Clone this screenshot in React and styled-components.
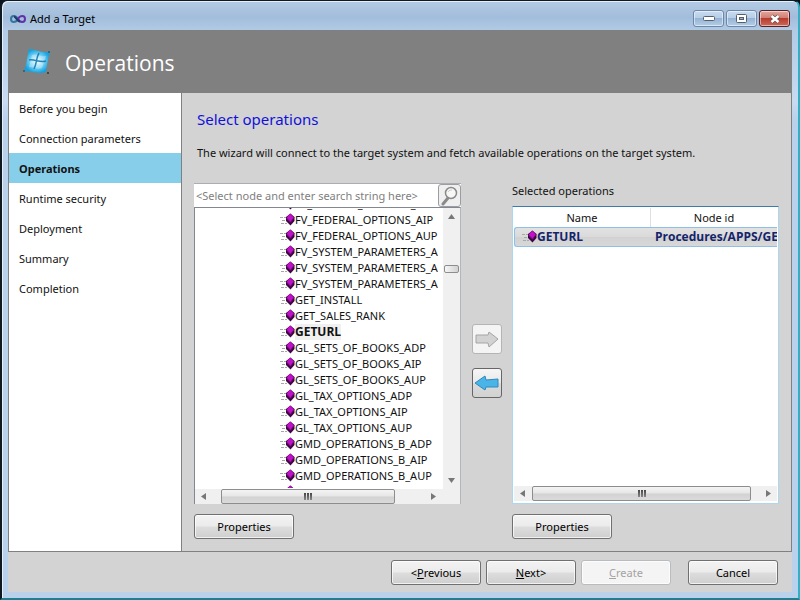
import React from "react";
import styled, { createGlobalStyle } from "styled-components";

const GlobalStyle = createGlobalStyle`
  * { box-sizing: border-box; }
  body { margin: 0; background: #0a1420; }
  body, button, input { font: 11px/16px "Noto Sans", "Open Sans", sans-serif; color: #111; }
  h1, h2, p, ul, ol { margin: 0; padding: 0; font-weight: 400; list-style: none; }
`;

const Window = styled.div`
  display: flex;
  flex-direction: column;
  min-height: 100vh;
  padding: 0 6px 6px;
  border: 2px solid #101820;
  border-top-width: 1px;
  border-right-color: #2fb0c4;
  border-bottom-color: #1f7f90;
  border-radius: 7px 7px 0 0;
  background: linear-gradient(#b4cbe4 0, #a2bddb 16px, #b2cbe6 30px, #c8dbf1 100px, #b9d1ea 120px, #b9d1ea);
  box-shadow: inset 1px 1px 0 #e4f0fb;
`;

const TitleBar = styled.div`
  display: flex;
  align-items: center;
  height: 29px;
  padding: 6px 2px 0 2px;
`;

const Title = styled.span`
  flex: 1;
  padding: 0 0 0 4px;
  color: #000;
`;

const Controls = styled.div`
  display: flex;
  gap: 2px;
`;

const ControlButton = styled.button`
  display: grid;
  place-items: center;
  width: 31px;
  height: 17px;
  padding: 0;
  border: 1px solid ${(p) => (p.$close ? "#5a1f24" : "#6d87a6")};
  border-radius: 3px;
  background: ${(p) =>
    p.$close
      ? "linear-gradient(#e3a79d, #cf7d72 48%, #b83b2c 50%, #cc6a5a)"
      : "linear-gradient(#c9dcf0, #b6cde6 48%, #95b3d4 50%, #b5cee8)"};
  box-shadow: inset 0 0 0 1px rgba(255, 255, 255, 0.5);
`;

const Client = styled.div`
  display: flex;
  flex-direction: column;
  flex: 1;
  background: #d3d3d3;
`;

const Banner = styled.header`
  display: flex;
  align-items: center;
  gap: 13px;
  height: 63px;
  padding: 0 14px;
  background: #808080;
  h1 { color: #fff; font-family: "Open Sans", sans-serif; font-size: 21px; line-height: 30px; padding-top: 2px; }
`;

const Body = styled.div`
  display: flex;
  flex: 1;
  border: 1px solid #808080;
  border-top: 0;
`;

const Sidebar = styled.ol`
  flex: 0 0 173px;
  background: #fff;
  border-right: 1px solid #808080;
`;

const Step = styled.li`
  height: 30px;
  padding: 8px 10px;
  line-height: 16px;
  background: ${(p) => (p.$current ? "#87ceeb" : "transparent")};
  font-weight: ${(p) => (p.$current ? 700 : 400)};
`;

const Content = styled.main`
  display: flex;
  flex-direction: column;
  flex: 1;
  min-width: 0;
  padding: 16px 12px 12px;
`;

const Heading = styled.h2`
  padding-left: 3px;
  color: #1010dc;
  font-size: 15px;
  line-height: 20px;
`;

const Description = styled.p`
  padding: 16px 0 0 3px;
`;

const Panes = styled.div`
  display: grid;
  grid-template-columns: minmax(0, 1fr) 51px minmax(0, 1fr);
  flex: 1;
  padding-top: 22px;
`;

const Pane = styled.section`
  display: flex;
  flex-direction: column;
  min-width: 0;
`;

const SearchRow = styled.div`
  display: flex;
  height: 24px;
  border-top: 1px solid #abadb3;
  background: #fff;
`;

const SearchInput = styled.input`
  flex: 1;
  min-width: 0;
  padding: 0 2px;
  border: 0;
  background: #fff;
  &::placeholder { color: #808080; opacity: 1; }
`;

const SearchButton = styled.button`
  display: grid;
  place-items: center;
  width: 23px;
  padding: 0;
  border: 1px solid #9a9da2;
  border-radius: 3px;
  background: #efefef;
`;

const Tree = styled.div`
  display: flex;
  flex-direction: column;
  flex: 1;
  border: 1px solid #828790;
  border-width: 1px 1px 0;
  border-right-color: #b4b6ba;
  background: #fff;
`;

const TreeView = styled.div`
  display: flex;
  flex: 1;
`;

const TreeClip = styled.div`
  flex: 1 1 0;
  height: 280px;
  min-width: 0;
  overflow: hidden;
`;

const TreeList = styled.ul`
  margin-top: -12px;
  padding-left: 84px;
`;

const TreeRow = styled.li`
  display: flex;
  align-items: center;
  height: 16px;
  white-space: nowrap;
  svg { flex: none; }
  span {
    background: ${(p) => (p.$selected ? "#f0f0f0" : "transparent")};
    font: ${(p) => (p.$selected ? '700 12px/16px "Open Sans", sans-serif' : "inherit")};
  }
`;

const VerticalBar = styled.div`
  display: flex;
  flex-direction: column;
  align-items: center;
  width: 17px;
  padding: 6px 0;
  background: #f0f0f0;
`;

const VerticalThumb = styled.div`
  width: 15px;
  height: 8px;
  margin: 46px 0 auto;
  border: 1px solid #8d8d8d;
  border-radius: 2px;
  background: linear-gradient(90deg, #f6f6f6, #d2d2d2);
`;

const HorizontalBar = styled.div`
  display: flex;
  align-items: center;
  height: 15px;
  padding: 0 ${(p) => (p.$wide ? 6 : 24)}px 0 6px;
  background: #f0f0f0;
`;

const HorizontalThumb = styled.div`
  display: flex;
  justify-content: center;
  align-items: center;
  gap: 1px;
  flex: 1;
  height: 15px;
  margin: 0 ${(p) => (p.$wide ? 15 : 36)}px 0 ${(p) => (p.$wide ? 7 : 15)}px;
  border: 1px solid #8d8d8d;
  border-radius: 2px;
  background: linear-gradient(#f4f4f4, #e6e6e6 48%, #d2d2d2 52%, #dadada);
  i { width: 2px; height: 7px; background: linear-gradient(#444, #888); }
`;

const Transfer = styled.div`
  display: flex;
  flex-direction: column;
  align-items: center;
  gap: 14px;
  padding-top: 141px;
`;

const ArrowButton = styled.button`
  display: grid;
  place-items: center;
  width: 30px;
  height: 30px;
  padding: 0;
  border: 1px solid ${(p) => (p.disabled ? "#b4b4b4" : "#666")};
  border-radius: 3px;
  background: ${(p) => (p.disabled ? "#f4f4f4" : "linear-gradient(#f6f6f6, #e8e8e8 50%, #dadada 52%, #d2d2d2)")};
`;

const PaneLabel = styled.h2`
  height: 23px;
  font-size: 11px;
  line-height: 16px;
`;

const ListBox = styled.div`
  display: flex;
  flex-direction: column;
  flex: 1;
  border: 1px solid #a9d8ef;
  border-top-color: #3d7bad;
  background: #fff;
  padding: 1px 1px 2px;
`;

const Table = styled.table`
  width: 100%;
  table-layout: fixed;
  border-collapse: separate;
  border-spacing: 0;
  margin-bottom: auto;
  th { height: 19px; padding: 0; font-weight: 400; line-height: 19px; }
  th:first-child { width: 136px; }
  th + th { border-left: 1px solid #dcdfe3; }
  td {
    height: 20px;
    padding: 0 0 0 5px;
    overflow: hidden;
    white-space: nowrap;
    color: #14246a;
    font: 700 12px/16px "Open Sans", sans-serif;
    border: solid #8fbfe6;
    border-width: 1px 0;
    background: linear-gradient(#e2e2e2, #dadada 48%, #d2d2d2 52%, #d8d8d8);
  }
  td:first-child { padding-left: 6px; border-left-width: 1px; border-radius: 3px 0 0 3px; }
`;

const NameCell = styled.div`
  display: flex;
  align-items: center;
`;

const Button = styled.button`
  height: 25px;
  width: ${(p) => p.$width || 90}px;
  padding: 0;
  border: 1px solid #707070;
  border-radius: 3px;
  background: linear-gradient(#f3f3f3, #ebebeb 49%, #dddddd 51%, #cfcfcf);
  box-shadow: inset 0 0 0 1px rgba(255, 255, 255, 0.7);
  color: #000;
  &:disabled { color: #a3a3a3; border-color: #b8bcbf; background: #f4f4f4; }
`;

const PaneAction = styled.div`
  padding-top: 10px;
`;

const Footer = styled.footer`
  display: flex;
  justify-content: flex-end;
  gap: 5px;
  padding: 8px 14px 7px;
  ${Button}:last-child { margin-left: 12px; }
`;

const NODES = [
  "FV_FEDERAL_OPTIONS_ADP", "FV_FEDERAL_OPTIONS_AIP", "FV_FEDERAL_OPTIONS_AUP",
  "FV_SYSTEM_PARAMETERS_A", "FV_SYSTEM_PARAMETERS_A", "FV_SYSTEM_PARAMETERS_A",
  "GET_INSTALL", "GET_SALES_RANK", "GETURL",
  "GL_SETS_OF_BOOKS_ADP", "GL_SETS_OF_BOOKS_AIP", "GL_SETS_OF_BOOKS_AUP",
  "GL_TAX_OPTIONS_ADP", "GL_TAX_OPTIONS_AIP", "GL_TAX_OPTIONS_AUP",
  "GMD_OPERATIONS_B_ADP", "GMD_OPERATIONS_B_AIP", "GMD_OPERATIONS_B_AUP",
  "GMD_OPERATIONS_TL",
];

const STEPS = ["Before you begin", "Connection parameters", "Operations", "Runtime security", "Deployment", "Summary", "Completion"];

const MethodIcon = () => (
  <svg width="16" height="16" viewBox="0 0 16 16" aria-hidden="true">
    <path d="M1 5.500h6M3 8.500h4M2 11.500h6" stroke="#a3aaa3" strokeDasharray="3 1" />
    <path d="M11.500 1.500 15.500 5v4l-4 4.500L7 9V5z" fill="#3b0742" />
    <path d="M11 1.500 15 5.500 11.500 10.500 7.500 6z" fill="#c010c8" />
    <path d="M7.500 6 11.500 10 15 5.500" fill="none" stroke="#7d0888" />
  </svg>
);

const Triangle = ({ d, vertical }) => (
  <svg width={vertical ? 7 : 5} height={vertical ? 5 : 7} aria-hidden="true"><path d={d} fill="#777" /></svg>
);

const LogoIcon = () => (
  <svg width="16" height="10" viewBox="0 0 16 10" fill="none" strokeWidth="2" aria-hidden="true">
    <path d="M8 5C6 1 1 1 1 5s5 4 7 0" stroke="#33769b" />
    <path d="M8 5c2-4 7-4 7 0s-5 4-7 0" stroke="#6032a8" />
    <path d="M4 2.500c2 0 3 5 6 5" stroke="#25366f" />
  </svg>
);

const FlagIcon = () => (
  <svg width="30" height="30" viewBox="0 0 30 30" aria-hidden="true">
    <defs>
      <radialGradient id="glow">
        <stop offset="0" stopColor="#f0fdff" />
        <stop offset=".5" stopColor="#7fd4f5" />
        <stop offset="1" stopColor="#12a2e0" />
      </radialGradient>
    </defs>
    <path d="M7 2c6 0 11 4 21 3-2 6-3 13-4 20-7 3-13-1-22-1C5 17 5 9 7 2z" fill="url(#glow)" />
    <path d="M10 8c4-2 8 2 14 1l-4 12c-4 2-8-1-13-1z" fill="#fff" opacity=".3" />
    <path d="M17 6c-3 5-2 10-5 16M7 13c6-1 11 3 17 1" stroke="#2485b8" strokeWidth="1.500" fill="none" />
    <circle cx="26" cy="26" r="1" fill="#333" /><circle cx="2" cy="24" r="1" fill="#275a78" />
    <circle cx="27" cy="5" r="1" fill="#275a78" />
  </svg>
);

const ArrowIcon = ({ left }) => (
  <svg width="26" height="20" viewBox="0 0 26 20" aria-hidden="true">
    {left ? (
      <path d="M1 10 11 3l1 4 12-1v8l-12 0-1 3z" fill="#49b4e8" stroke="#3188ba" strokeLinejoin="round" />
    ) : (
      <path d="M2 6h12l1-3 9 7-9 8-1-4H2z" fill="#d2d2d2" stroke="#a4a4a4" strokeLinejoin="round" />
    )}
  </svg>
);

const Scroll = ({ wide }) => (
  <HorizontalBar $wide={wide}>
    <Triangle d="M5 0v7L0 3.500z" />
    <HorizontalThumb $wide={wide}><i /><i /><i /></HorizontalThumb>
    <Triangle d="M0 0v7l5-3.500z" />
  </HorizontalBar>
);

export default function App() {
  return (
    <>
      <GlobalStyle />
      <Window>
        <TitleBar>
          <LogoIcon />
          <Title>Add a Target</Title>
          <Controls>
            <ControlButton aria-label="Minimize">
              <svg width="12" height="5"><rect x=".5" y=".5" width="11" height="4" rx="1" fill="#fff" stroke="#555e6b" /></svg>
            </ControlButton>
            <ControlButton aria-label="Maximize">
              <svg width="11" height="9"><rect x=".5" y=".5" width="10" height="8" rx="1" fill="#fff" stroke="#555e6b" /><rect x="3.500" y="3.500" width="4" height="2" fill="#9ab4d0" stroke="#555e6b" /></svg>
            </ControlButton>
            <ControlButton $close aria-label="Close">
              <svg width="12" height="10" fill="none"><path d="M2.500 2l7 6m0-6-7 6" stroke="#555" strokeWidth="4" /><path d="M2.500 2l7 6m0-6-7 6" stroke="#fff" strokeWidth="2.500" /></svg>
            </ControlButton>
          </Controls>
        </TitleBar>
        <Client>
          <Banner>
            <FlagIcon />
            <h1>Operations</h1>
          </Banner>
          <Body>
            <Sidebar>
              {STEPS.map((s) => <Step key={s} $current={s === "Operations"}>{s}</Step>)}
            </Sidebar>
            <Content>
              <Heading>Select operations</Heading>
              <Description>The wizard will connect to the target system and fetch available operations on the target system.</Description>
              <Panes>
                <Pane>
                  <SearchRow>
                    <SearchInput aria-label="Search nodes" placeholder="<Select node and enter search string here>" />
                    <SearchButton aria-label="Search">
                      <svg width="19" height="20" viewBox="0 0 19 20" fill="none">
                        <path d="M8 12 3 18" stroke="#8a8a8a" strokeWidth="3" strokeLinecap="round" />
                        <circle cx="11" cy="7" r="5.500" fill="#f7f7f7" stroke="#8a8a8a" strokeWidth="1.500" />
                        <path d="M8 6c1-2 3-2 4-2" stroke="#ccc" />
                      </svg>
                    </SearchButton>
                  </SearchRow>
                  <Tree>
                    <TreeView>
                      <TreeClip>
                        <TreeList>
                          {NODES.map((n, i) => <TreeRow key={i} $selected={n === "GETURL"}><MethodIcon /><span>{n}</span></TreeRow>)}
                        </TreeList>
                      </TreeClip>
                      <VerticalBar>
                        <Triangle vertical d="M0 5h7L3.500 0z" />
                        <VerticalThumb />
                        <Triangle vertical d="M0 0h7L3.500 5z" />
                      </VerticalBar>
                    </TreeView>
                    <Scroll />
                  </Tree>
                  <PaneAction><Button $width={100}>Properties</Button></PaneAction>
                </Pane>
                <Transfer>
                  <ArrowButton disabled aria-label="Add operation"><ArrowIcon /></ArrowButton>
                  <ArrowButton aria-label="Remove operation"><ArrowIcon left /></ArrowButton>
                </Transfer>
                <Pane>
                  <PaneLabel>Selected operations</PaneLabel>
                  <ListBox>
                    <Table>
                      <thead><tr><th>Name</th><th>Node id</th></tr></thead>
                      <tbody><tr><td><NameCell><MethodIcon />GETURL</NameCell></td><td>Procedures/APPS/GETURL</td></tr></tbody>
                    </Table>
                    <Scroll wide />
                  </ListBox>
                  <PaneAction><Button $width={100}>Properties</Button></PaneAction>
                </Pane>
              </Panes>
            </Content>
          </Body>
          <Footer>
            <Button>&lt;<u>P</u>revious</Button>
            <Button><u>N</u>ext&gt;</Button>
            <Button disabled><u>C</u>reate</Button>
            <Button>Cancel</Button>
          </Footer>
        </Client>
      </Window>
    </>
  );
}
